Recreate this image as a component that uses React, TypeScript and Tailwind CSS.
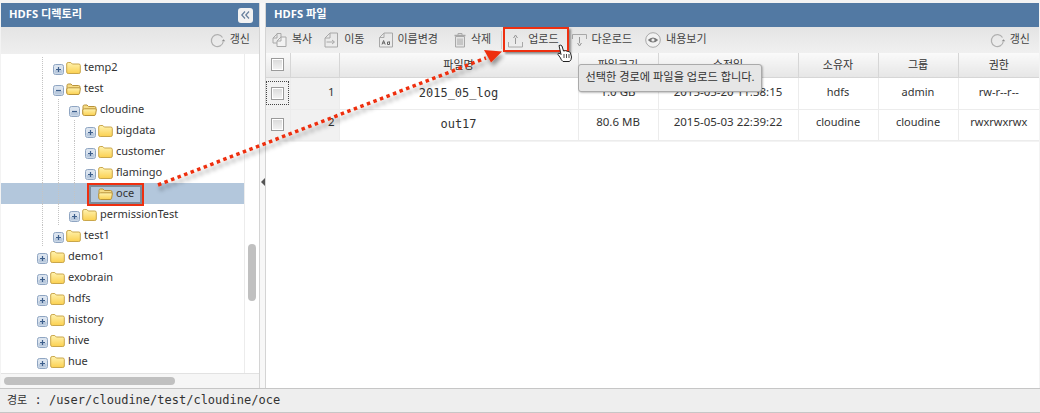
import React from "react";

const FONT = "font-['Noto_Sans','Noto_Sans_CJK_KR',sans-serif]";
const MONO = "font-['DejaVu_Sans_Mono','Noto_Sans_CJK_KR',monospace]";

function Expander({ open }: { open?: boolean }) {
  return (
    <svg width="11" height="11" viewBox="0 0 11 11" className="relative block">
      <rect x="0.5" y="0.5" width="10" height="10" rx="2" fill="#dbe4ef" stroke="#8fa5c2" />
      <rect x="1.5" y="6" width="8" height="3.5" fill="#b9c9dd" />
      <path d={open ? "M3 5.5H8" : "M3 5.5H8M5.5 3V8"} stroke="#3d5f8c" strokeWidth="1.2" />
    </svg>
  );
}

function Folder({ open }: { open?: boolean }) {
  return (
    <svg width="15" height="14" viewBox="0 0 15 14" className="block">
      <defs>
        <linearGradient id="fg" x1="0" y1="0" x2="0" y2="1">
          <stop offset="0" stopColor="#fff3b0" />
          <stop offset="1" stopColor="#fbd050" />
        </linearGradient>
      </defs>
      {open ? (
        <>
          <path d="M1 11V3.5Q1 2 2.5 2H5L6.5 3.5H12.5Q14 3.5 14 5V7" fill="#f6dc86" stroke="#b9933a" />
          <path d="M0.7 7Q1 5.8 2.5 5.8H13.2Q14.6 5.8 14.3 7L13.6 11.3Q13.4 12.5 12 12.5H2.5Q1 12.5 0.8 11.2Z" fill="url(#fg)" stroke="#b9933a" />
        </>
      ) : (
        <path d="M0.7 3Q0.7 1.5 2.2 1.5H4.8L6.3 3H12.8Q14.3 3 14.3 4.5V11Q14.3 12.5 12.8 12.5H2.2Q0.7 12.5 0.7 11Z" fill="url(#fg)" stroke="#c9a64b" />
      )}
    </svg>
  );
}

type Row = { name: string; level: number; guides: number[]; open?: boolean; leaf?: boolean; selected?: boolean };

const rows: Row[] = [
  { name: "temp2", level: 1, guides: [0] },
  { name: "test", level: 1, guides: [0], open: true },
  { name: "cloudine", level: 2, guides: [0, 1], open: true },
  { name: "bigdata", level: 3, guides: [0, 1, 2] },
  { name: "customer", level: 3, guides: [0, 1, 2] },
  { name: "flamingo", level: 3, guides: [0, 1, 2] },
  { name: "oce", level: 3, guides: [0, 1, 2], open: true, leaf: true, selected: true },
  { name: "permissionTest", level: 2, guides: [0, 1] },
  { name: "test1", level: 1, guides: [0] },
  { name: "demo1", level: 0, guides: [] },
  { name: "exobrain", level: 0, guides: [] },
  { name: "hdfs", level: 0, guides: [] },
  { name: "history", level: 0, guides: [] },
  { name: "hive", level: 0, guides: [] },
  { name: "hue", level: 0, guides: [] },
];

function TreeRow({ r }: { r: Row }) {
  return (
    <div className={`flex h-[21px] items-center pl-[33px] text-[11px] text-[#333] ${r.selected ? "bg-[#b3c7dc]" : ""}`}>
      {Array.from({ length: r.level }).map((_, i) => (
        <div key={i} className="flex h-full w-4 justify-center">
          {r.guides.includes(i) && <div className="h-full border-l border-dotted border-[#c4c4c4]" />}
        </div>
      ))}
      <div className="flex h-full w-4 items-center justify-center">
        {r.leaf ? null : (
          <div className="mt-1">
            <Expander open={r.open} />
          </div>
        )}
      </div>
      <div className="mt-px">
        <Folder open={r.open} />
      </div>
      <span className="ml-[3px]">{r.name}</span>
    </div>
  );
}

const gray = "#a8a8a8";

function Refresh() {
  return (
    <svg width="17" height="17" viewBox="0 0 17 17" fill="none" className="block">
      <path d="M14.3 9.5A6 6 0 1 1 13.5 5.5" stroke="#b0b0b0" strokeWidth="1.2" />
      <path d="M12.6 9.3L14.6 7.3L16.2 9.3Z" fill="#8e8e8e" />
    </svg>
  );
}

const icons: Record<string, React.ReactNode> = {
  copy: (
    <svg width="15" height="16" viewBox="0 0 15 16" fill="none" stroke={gray} className="block">
      <path d="M1 6L5 2V1.5H9V5" />
      <path d="M1 6H5V2" />
      <path d="M1 6V11H5" />
      <path d="M5 9L9 5H14V14.5H5Z" fill="#f2f2f2" />
      <path d="M5 9H9V5" />
    </svg>
  ),
  move: (
    <svg width="15" height="16" viewBox="0 0 15 16" fill="none" stroke={gray} className="block">
      <path d="M1 6L6 1H13.5V15H1Z" />
      <path d="M1 6H6V1" />
      <path d="M2.5 10H10M8 8L10.5 10L8 12" />
    </svg>
  ),
  rename: (
    <svg width="14" height="16" viewBox="0 0 14 16" fill="none" stroke={gray} className="block">
      <path d="M0.5 5.5L5 1H13.5V15H0.5Z" />
      <path d="M0.5 5.5H5V1" />
      <path d="M3 12.5L4.6 8.5L6.2 12.5M3.6 11H5.6" stroke="#666" />
      <path d="M10.5 10H8.5V12.5H10.5V9.5" stroke="#666" />
    </svg>
  ),
  del: (
    <svg width="12" height="16" viewBox="0 0 12 16" fill="none" stroke={gray} className="block">
      <path d="M0.5 3.5H11.5" strokeWidth="1.5" />
      <path d="M4 3V1.5H8V3" />
      <path d="M1.5 4.5H10.5V15H1.5Z" fill="#e4e4e4" />
      <path d="M4 6.5V13M6 6.5V13M8 6.5V13" />
    </svg>
  ),
  upload: (
    <svg width="15" height="15" viewBox="0 0 15 15" fill="none" stroke={gray} className="block">
      <path d="M0.5 9V14H14.5V9" />
      <path d="M7.5 11V3" stroke="#999" />
      <path d="M5.5 5L7.5 2L9.5 5" stroke="#999" fill="#ddd" />
    </svg>
  ),
  download: (
    <svg width="15" height="15" viewBox="0 0 15 15" fill="none" stroke={gray} className="block">
      <path d="M0.5 6V1.5H14.5V6" />
      <path d="M7.5 4V12" stroke="#999" />
      <path d="M5.5 10L7.5 13L9.5 10" stroke="#999" fill="#ddd" />
    </svg>
  ),
  eye: (
    <svg width="16" height="16" viewBox="0 0 16 16" fill="none" className="block">
      <circle cx="8" cy="8" r="7.3" stroke={gray} fill="#f2f2f2" />
      <path d="M2.8 8Q8 3 13.2 8Q8 13 2.8 8Z" fill="#777" />
      <circle cx="8" cy="8" r="1.6" fill="#eee" />
    </svg>
  ),
};

function Tool({ icon, label, className }: { icon: string; label: string; className: string }) {
  return (
    <div className={`flex items-center ${className}`}>
      {icons[icon]}
      <span className="ml-[5px] -mt-0.5 text-[11px] text-[#444]">{label}</span>
    </div>
  );
}

function Refreshing() {
  return (
    <div className="flex items-center gap-1 text-[11px] text-[#444]">
      <Refresh />
      <span className="-mt-0.5">갱신</span>
    </div>
  );
}

function CheckBox() {
  return <div className="mx-auto h-[13px] w-[13px] border border-[#9a9a9a] bg-gradient-to-b from-[#d8d8d8] to-[#f4f4f4] shadow-[inset_0_0_0_1px_#fff]" />;
}

const thCls =
  "h-[24px] border-r border-b border-[#d6d6d6] bg-gradient-to-b from-[#fafafa] to-[#e6e6e6] text-center align-middle text-[11px] font-normal text-[#333]";
const tdCls = "border-r border-b border-[#ececec] text-center align-middle text-[#333]";

const files = [
  { n: 1, name: "2015_05_log", size: "1.0 GB", date: "2015-05-20 11:38:15", owner: "hdfs", group: "admin", perm: "rw-r--r--" },
  { n: 2, name: "out17", size: "80.6 MB", date: "2015-05-03 22:39:22", owner: "cloudine", group: "cloudine", perm: "rwxrwxrwx" },
];

function Header({ title, children }: { title: string; children?: React.ReactNode }) {
  return (
    <div className="flex h-[24px] shrink-0 items-center justify-between bg-[#5279a3] pl-2 pr-1.5 text-[11.2px] font-bold text-white">
      <span className="-mt-0.5">{title}</span>
      {children}
    </div>
  );
}

export default function App() {
  return (
    <div className={`relative flex h-[413px] w-[1040px] flex-col overflow-hidden bg-white ${FONT}`}>
      <div className="flex min-h-0 flex-1 bg-[#f3f3f3] pt-[3px]">
        {/* Left panel */}
        <div className="ml-px flex w-[258px] shrink-0 flex-col bg-white">
          <Header title="HDFS 디렉토리">
            <div className="flex h-[15px] w-[15px] items-center justify-center rounded-[3px] bg-[#f2f2f2]">
              <svg width="9" height="8" viewBox="0 0 9 8" fill="none" stroke="#667f9c" strokeWidth="1.2">
                <path d="M4 0.5L0.8 4L4 7.5M8 0.5L4.8 4L8 7.5" />
              </svg>
            </div>
          </Header>
          <div className="flex h-[27px] shrink-0 items-center justify-end bg-gradient-to-b from-[#e4e4e4] to-[#efefef] pr-[9px]">
            <Refreshing />
          </div>
          <div className="flex min-h-0 flex-1">
            <div className="w-[243px] overflow-hidden pt-[3px]">
              {rows.map((r) => (
                <TreeRow key={r.name} r={r} />
              ))}
            </div>
            <div className="flex w-[15px] flex-col border-l border-[#ececec] pl-[3px] pt-[190px]">
              <div className="h-[57px] w-2 rounded bg-[#c0c0c0]" />
            </div>
          </div>
          <div className="flex h-[15px] shrink-0 items-center border-t border-[#e2e2e2] bg-[#f6f6f6] pl-[3px]">
            <div className="h-2 w-[171px] rounded bg-[#c0c0c0]" />
          </div>
        </div>
        {/* Splitter */}
        <div className="flex w-[7px] shrink-0 items-center justify-center border-x border-[#d4d4d4] bg-[#f7f7f7] pb-[28px]">
          <svg width="4" height="8" viewBox="0 0 4 8">
            <path d="M4 0V8L0 4Z" fill="#555" />
          </svg>
        </div>
        {/* Right panel */}
        <div className="flex w-[773px] shrink-0 flex-col bg-white">
          <Header title="HDFS 파일" />
          <div className="flex h-[26px] shrink-0 items-center bg-gradient-to-b from-[#e4e4e4] to-[#f0f0f0] pl-[6px] pr-[9px]">
            <Tool icon="copy" label="복사" className="" />
            <Tool icon="move" label="이동" className="ml-[12px]" />
            <Tool icon="rename" label="이름변경" className="ml-[14px]" />
            <Tool icon="del" label="삭제" className="ml-[16px]" />
            <div className="ml-[10px] h-[18px] border-l border-[#cfcfcf]" />
            <Tool icon="upload" label="업로드" className="ml-[6px]" />
            <Tool icon="download" label="다운로드" className="ml-[13px]" />
            <Tool icon="eye" label="내용보기" className="ml-[13px]" />
            <div className="ml-auto">
              <Refreshing />
            </div>
          </div>
          <table className="w-[773px] table-fixed border-collapse">
            <colgroup>
              <col className="w-[24px]" />
              <col className="w-[49px]" />
              <col className="w-[239px]" />
              <col className="w-[80px]" />
              <col className="w-[140px]" />
              <col className="w-[80px]" />
              <col className="w-[80px]" />
              <col className="w-[81px]" />
            </colgroup>
            <thead>
              <tr>
                <th className={thCls}>
                  <CheckBox />
                </th>
                <th className={thCls} />
                <th className={thCls}>파일명</th>
                <th className={thCls}>파일크기</th>
                <th className={thCls}>수정일</th>
                <th className={thCls}>소유자</th>
                <th className={thCls}>그룹</th>
                <th className={`${thCls} border-r-0`}>권한</th>
              </tr>
            </thead>
            <tbody>
              {files.map((f) => {
                const h = f.n === 1 ? "h-[32px] pb-[2px]" : "h-[31px] pb-[5px]";
                return (
                  <tr key={f.n}>
                    <td className={`border-r border-b border-[#ececec] bg-[#f1f1f1] align-middle ${f.n === 1 ? "h-[32px]" : "h-[31px]"}`}>
                      <div className={f.n === 1 ? "mx-auto flex h-[24px] w-[23px] items-center border border-dotted border-[#444]" : ""}>
                        <CheckBox />
                      </div>
                    </td>
                    <td className={`${tdCls} ${h} bg-[#f1f1f1] pr-[4px] text-right text-[11.5px]`}>{f.n}</td>
                    <td className={`${tdCls} ${f.n === 1 ? "h-[32px]" : "h-[31px] pb-[2px]"} ${MONO} text-[12px] text-[#222]`}>{f.name}</td>
                    <td className={`${tdCls} ${h} text-[11.5px]`}>{f.size}</td>
                    <td className={`${tdCls} ${h} text-[11.5px]`}>{f.date}</td>
                    <td className={`${tdCls} ${h} text-[11px]`}>{f.owner}</td>
                    <td className={`${tdCls} ${h} text-[11px]`}>{f.group}</td>
                    <td className={`${tdCls} ${h} border-r-0 text-[11px]`}>{f.perm}</td>
                  </tr>
                );
              })}
            </tbody>
          </table>
          <div className="flex-1 border-t border-[#f3f3f3]" />
        </div>
      </div>
      {/* Status bar */}
      <div className={`flex h-[25px] shrink-0 items-center border-y border-[#c6c6c6] bg-[#eeeeee] pl-[7px] text-[12px] text-[#333] ${MONO}`}>
        <span className="whitespace-pre">
          <span className="text-[11px]">경로</span> : /user/cloudine/test/cloudine/oce
        </span>
      </div>

      {/* Annotation overlay */}
      <div className="absolute left-[578px] top-[64px] flex h-[28px] w-[184px] items-center justify-center rounded-[3px] border border-[#aaa] bg-[#e6e6e6] text-[11.2px] text-[#333] shadow-[1px_1px_2px_rgba(0,0,0,0.25)]">
        <span className="-mt-0.5">선택한 경로에 파일을 업로드 합니다.</span>
      </div>
      <div className="absolute left-[87px] top-[183px] h-[23px] w-[57px] border-2 border-[#ee2f10] shadow-[inset_0_0_0_2px_rgba(80,90,100,0.55)]" />
      <div className="absolute left-[503px] top-[27px] h-[25px] w-[66px] border-2 border-[#ee2f10] shadow-[2px_2px_2px_rgba(60,60,60,0.55)]" />
      <svg className="absolute left-0 top-0" width="1040" height="413" viewBox="0 0 1040 413" fill="none">
        <defs>
          <filter id="ds" x="-10%" y="-30%" width="120%" height="170%">
            <feDropShadow dx="2" dy="4" stdDeviation="2" floodColor="#000" floodOpacity="0.4" />
          </filter>
        </defs>
        <g filter="url(#ds)">
          <path d="M158 185L486 58" stroke="#ee2f10" strokeWidth="3.5" strokeDasharray="3.5 3.5" />
          <path d="M484 50L502 51.5L491 62.5Z" fill="#ee2f10" />
        </g>
        <path
          d="M559 45.5Q561 44.5 562 46L563.5 51Q566 50 567.5 51.5Q569.5 51 570.5 53L571.5 57Q571.5 60 569.5 61.5H563Q561 60 560.5 58L558 54.5Q557.5 52.5 560 53.5L561 54.5Z"
          fill="#fff"
          stroke="#222"
          strokeWidth="1"
        />
        <path d="M564 54V58M566.5 54V58M569 54V58" stroke="#222" strokeWidth="0.8" />
      </svg>
    </div>
  );
}
